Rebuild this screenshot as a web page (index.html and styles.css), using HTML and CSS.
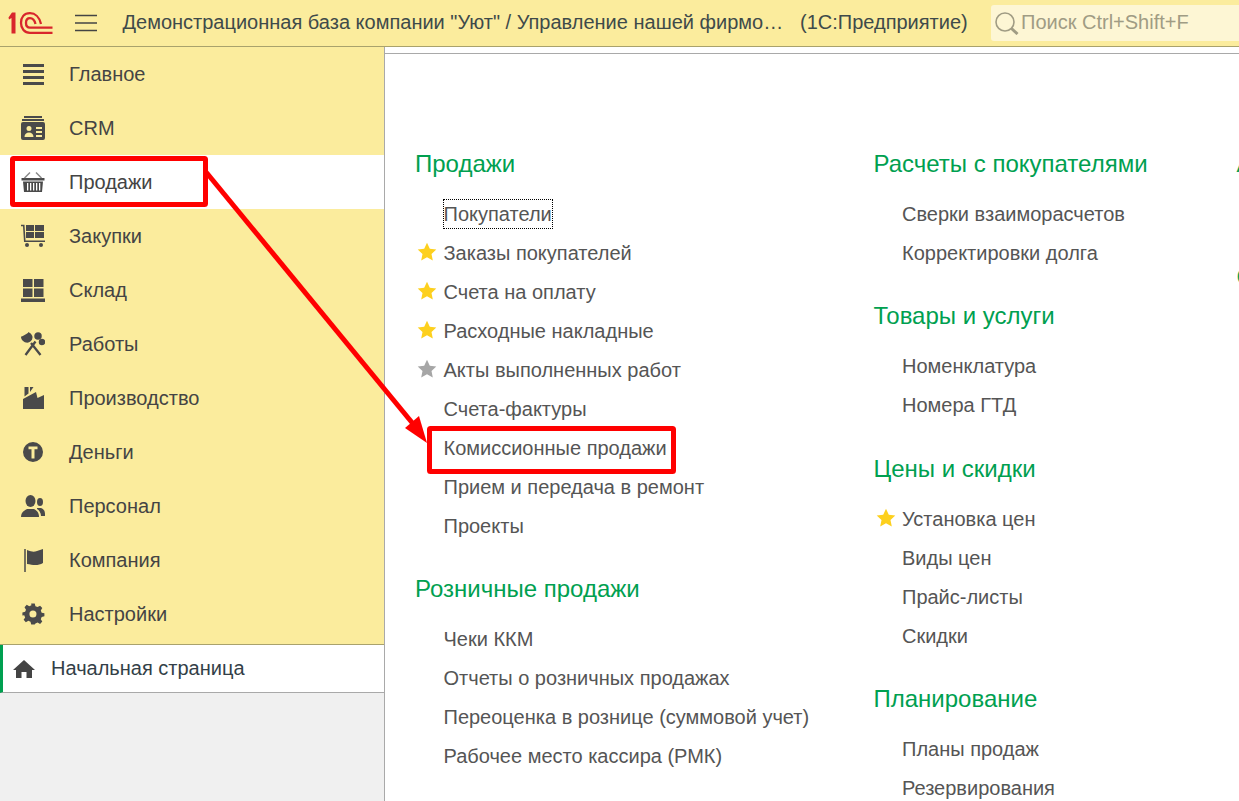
FILE: index.html
```html
<!DOCTYPE html>
<html lang="ru">
<head>
<meta charset="utf-8">
<title>1С</title>
<link rel="stylesheet" href="styles.css">
</head>
<body>
<header class="topbar">
  <svg class="logo" width="46" height="28" viewBox="0 0 46 28" fill="none" stroke="#d8262c" stroke-width="2.300">
    <path d="M.5 7.500L4 2.500H7.500V23.500H3.500V8L1 9.500Z" fill="#d8262c" stroke="none"/>
    <path d="M33 14C31.500 7 27 3.200 22 3.200C16 3.200 13 7.500 13 13C13 18.500 16.500 22.800 22 22.800H44.500"/>
    <path d="M27.500 14C26.500 10 24.500 8.200 22 8.200C19.500 8.200 18 10.300 18 13C18 15.700 19.500 17.600 22 17.600H44.500"/>
  </svg>
  <svg class="burger" width="22" height="18" viewBox="0 0 22 18" stroke="#444" stroke-width="1.300"><path d="M0 1.500H22M0 9H22M0 16.500H22"/></svg>
  <div class="title">Демонстрационная база компании "Уют" / Управление нашей фирмо…</div>
  <div class="app">(1С:Предприятие)</div>
  <div class="search">
    <svg width="24" height="24" viewBox="0 0 24 24" fill="none" stroke="#a09c84"><circle cx="10" cy="11" r="9" stroke-width="1.600"/><path d="M16.500 17.500L22.500 23" stroke-width="3"/></svg>
    <span>Поиск Ctrl+Shift+F</span>
  </div>
</header>
<div class="main">
  <aside class="side">
    <nav class="menu">
      <a class="item"><svg class="ic" viewBox="0 0 24 24"><path d="M2 2h21v3H2zM2 8h21v3H2zM2 14h21v3H2zM2 20h21v3H2z"/></svg>Главное</a>
      <a class="item"><svg class="ic" viewBox="0 0 24 24"><path d="M3 0h18v2H3zM1 3h22v2H1z"/><path fill-rule="evenodd" d="M2 6h20a2 2 0 0 1 2 2v14a2 2 0 0 1-2 2H2a2 2 0 0 1-2-2V8a2 2 0 0 1 2-2zM8 10a2.500 2.500 0 1 0 0 5 2.500 2.500 0 0 0 0-5zM3.500 21h9c0-3-2-4.500-4.500-4.500S3.500 18 3.500 21zM15 11v2h6v-2zM15 15v2h6v-2zM15 19v2h6v-2z"/></svg>CRM</a>
      <a class="item active"><svg class="ic" viewBox="0 0 24 24"><path d="M.500 8h23v2.500H.500z"/><path d="M2 11.500h20l-1 10.500H3zM6 13v7.500h1.300V13zM9 13v7.500h1.300V13zM12 13v7.500h1.300V13zM15 13v7.500h1.300V13zM18 13v7.500h1.300V13z" fill-rule="evenodd"/><path d="M3.500 8L9 2.500M20.500 8L15 2.500" stroke="#8a8a8a" stroke-width="1.500" fill="none"/></svg>Продажи</a>
      <a class="item"><svg class="ic" viewBox="0 0 24 24"><path d="M5 1h8v6H5zM14 1h9v6h-9zM5 8h8v6H5zM14 8h9v6h-9z"/><path d="M0 .8h3.500l1 15.700H24v1.500H3L2 2.300H0z"/><circle cx="6" cy="21" r="2"/><circle cx="20" cy="21" r="2"/></svg>Закупки</a>
      <a class="item"><svg class="ic" viewBox="0 0 24 24"><path d="M2 1h9.500v8H2zM13 1h9.500v8H13zM2 10.500h9.500V19H2zM13 10.500h9.500V19H13zM0 20.500h24V24H0z"/></svg>Склад</a>
      <a class="item"><svg class="ic" viewBox="0 0 24 24" fill="none" stroke="#4a4a4a"><path d="M4.500 23L14.500 9.500M19.500 23L10 11" stroke-width="2.300"/><path d="M1 4.500C1.500 9.500 6.500 10.500 9 8.500C11.500 6 10.500 2.500 7 1" stroke-width="2.200"/><circle cx="17" cy="4" r="2.800" stroke-width="1.900"/><circle cx="21" cy="10" r="2.300" stroke-width="1.900"/></svg>Работы</a>
      <a class="item"><svg class="ic" viewBox="0 0 24 24"><path d="M3.500 1h4v6.500l-4 3zM9 1h3.500L9 6z"/><path d="M2 13L15 6l1.500 6L23 9v14H2z"/></svg>Производство</a>
      <a class="item"><svg class="ic" viewBox="0 0 24 24"><path fill-rule="evenodd" d="M12 2a10 10 0 1 1 0 20 10 10 0 0 1 0-20zM7.500 6.500v2.800h3V18.500h3V9.300h3V6.500z"/></svg>Деньги</a>
      <a class="item"><svg class="ic" viewBox="0 0 24 24"><ellipse cx="9.500" cy="7" rx="5" ry="6"/><path d="M0 23c0-5 4-7 6-8h7c2 1 5 3 5 8z"/><ellipse cx="19" cy="8" rx="3" ry="4"/><path d="M16 14h4c2 1 4 2 4 6v2h-4c0-3-2-6-4-7z"/></svg>Персонал</a>
      <a class="item"><svg class="ic" viewBox="0 0 24 24"><path d="M3 1h2v23H3z" opacity=".75"/><path d="M6 2c5 2 7 2 10 1l6-2v14c-5 3-10 2-16 1z"/></svg>Компания</a>
      <a class="item"><svg class="ic" viewBox="0 0 24 24"><path transform="translate(1.400 1.400) scale(.88)" fill-rule="evenodd" d="M10 0h4l.8 3.200 2.400 1 2.900-1.600 2.500 2.700-1.700 2.800 1 2.400 3.100.8v3.400l-3.100.8-1 2.400 1.700 2.800-2.500 2.700-2.900-1.600-2.400 1L14 24h-4l-.8-3.200-2.400-1-2.900 1.600-2.500-2.700 1.700-2.800-1-2.400L0 13.700v-3.400l3.100-.8 1-2.400-1.700-2.800 2.500-2.700 2.900 1.600 2.400-1zM12 8a4 4 0 1 0 0 8 4 4 0 0 0 0-8z"/></svg>Настройки</a>
    </nav>
    <a class="home"><svg class="homeic" viewBox="0 0 22 20"><path d="M11 1L0 11h3v8h5.500v-6h5v6H19v-8h3z"/></svg>Начальная страница</a>
  </aside>
  <main class="content">
    <div class="cols">
      <section class="col col1">
        <h2>Продажи</h2>
        <ul>
          <li><span class="focus">Покупатели</span></li>
          <li><svg class="star" viewBox="0 0 20 20"><path d="M10 .8l2.800 6 6.500.8-4.800 4.400 1.300 6.500L10 15.300l-5.800 3.200 1.300-6.500L.7 7.600l6.500-.8z"/></svg>Заказы покупателей</li>
          <li><svg class="star" viewBox="0 0 20 20"><path d="M10 .8l2.800 6 6.500.8-4.800 4.400 1.300 6.500L10 15.300l-5.800 3.200 1.300-6.500L.7 7.600l6.500-.8z"/></svg>Счета на оплату</li>
          <li><svg class="star" viewBox="0 0 20 20"><path d="M10 .8l2.800 6 6.500.8-4.800 4.400 1.300 6.500L10 15.300l-5.800 3.200 1.300-6.500L.7 7.600l6.500-.8z"/></svg>Расходные накладные</li>
          <li><svg class="star grey" viewBox="0 0 20 20"><path d="M10 .8l2.800 6 6.500.8-4.800 4.400 1.300 6.500L10 15.300l-5.800 3.200 1.300-6.500L.7 7.600l6.500-.8z"/></svg>Акты выполненных работ</li>
          <li>Счета-фактуры</li>
          <li>Комиссионные продажи</li>
          <li>Прием и передача в ремонт</li>
          <li>Проекты</li>
        </ul>
        <h2>Розничные продажи</h2>
        <ul>
          <li>Чеки ККМ</li>
          <li>Отчеты о розничных продажах</li>
          <li>Переоценка в рознице (суммовой учет)</li>
          <li>Рабочее место кассира (РМК)</li>
        </ul>
      </section>
      <section class="col col2">
        <h2>Расчеты с покупателями</h2>
        <ul>
          <li>Сверки взаиморасчетов</li>
          <li>Корректировки долга</li>
        </ul>
        <h2>Товары и услуги</h2>
        <ul>
          <li>Номенклатура</li>
          <li>Номера ГТД</li>
        </ul>
        <h2>Цены и скидки</h2>
        <ul>
          <li><svg class="star" viewBox="0 0 20 20"><path d="M10 .8l2.800 6 6.500.8-4.800 4.400 1.300 6.500L10 15.300l-5.800 3.200 1.300-6.500L.7 7.600l6.500-.8z"/></svg>Установка цен</li>
          <li>Виды цен</li>
          <li>Прайс-листы</li>
          <li>Скидки</li>
        </ul>
        <h2>Планирование</h2>
        <ul>
          <li>Планы продаж</li>
          <li>Резервирования</li>
        </ul>
      </section>
      <section class="col col3">
        <h2>Анализ</h2>
        <div class="stub">Сервис</div>
      </section>
    </div>
  </main>
</div>
<svg class="marks" width="1239" height="801" viewBox="0 0 1239 801" fill="none" stroke="#ff0000">
  <rect x="12.500" y="158.500" width="193" height="46" stroke-width="5" rx="1"/>
  <rect x="429.500" y="428.500" width="244" height="43" stroke-width="5" rx="1"/>
  <path d="M206 172L414 425" stroke-width="5"/>
  <path d="M427 443L405 428L419 416Z" fill="#ff0000" stroke="none"/>
</svg>
</body>
</html>
```
FILE: styles.css
```css
* { box-sizing: border-box; }
html, body { margin: 0; height: 100%; overflow: hidden; }
body { width: 1239px; height: 801px; position: relative; font-family: "Liberation Sans", Arial, sans-serif; color: #4a4a4a; background: #fff; }
.topbar { height: 47px; background: #fbec9d; border-bottom: 1px solid #a9a26c; display: flex; align-items: center; color: #3e4a4a; font-size: 20px; padding-left: 8px; }
.logo { flex: none; margin-right: 20.5px; margin-top: 1px; }
.burger { flex: none; margin-right: 26px; }
.title { white-space: nowrap; width: 677.5px; margin-top: -1px; }
.app { white-space: nowrap; width: 191px; margin-top: -1px; }
.search { flex: 1; height: 36px; margin-top: -1px; background: #fdf6d4; border-radius: 3px 0 0 3px; display: flex; align-items: center; color: #a09c84; padding-left: 4px; gap: 2px; white-space: nowrap; }
.main { display: flex; height: 754px; }
.side { width: 385px; flex: none; background: #f0f0f0; border-right: 1px solid #a9a9a9; display: flex; flex-direction: column; }
.menu { background: #fbec9d; border-bottom: 1px solid #a9a26c; height: 598px; }
.item { height: 54px; display: flex; align-items: center; font-size: 20px; color: #444; padding-left: 21px; gap: 24px; }
.item.active { background: #fff; }
.ic { width: 24px; height: 24px; flex: none; fill: #4a4a4a; }
.home { height: 48px; background: #fff; border-left: 3px solid #00a050; border-bottom: 1px solid #a9a9a9; display: flex; align-items: center; font-size: 20px; color: #333f48; padding-left: 10px; gap: 16px; }
.homeic { width: 22px; height: 20px; fill: #444; flex: none; }
.content { flex: 1; overflow: hidden; }
.cols { margin-top: 6px; border-top: 1px solid #a9a9a9; padding: 90.9px 0 0 30px; display: flex; }
.col { flex: none; position: relative; }
.col1 { width: 458.5px; }
.col2 { width: 363px; }
.col3 { width: 100px; }
h2 { margin: 0; font-size: 24px; font-weight: 400; color: #00a050; height: 39px; line-height: 37px; white-space: nowrap; }
ul { list-style: none; margin: 11px 0 24.5px; padding: 0 0 0 28.5px; }
li { height: 39px; line-height: 39px; font-size: 20px; white-space: nowrap; position: relative; color: #555; }
.star { position: absolute; left: -26.5px; top: 8.5px; width: 20px; height: 20px; fill: #fdd01e; }
.star.grey { fill: #a6a6a6; }
.focus { position: relative; }
.focus::after { content: ""; position: absolute; left: -1px; right: -1px; top: -4px; bottom: -4px; border: 1px dotted #000; }
.stub { margin-top: 79px; font-size: 24px; color: #00a050; white-space: nowrap; }
.marks { position: absolute; left: 0; top: 0; pointer-events: none; }
```
